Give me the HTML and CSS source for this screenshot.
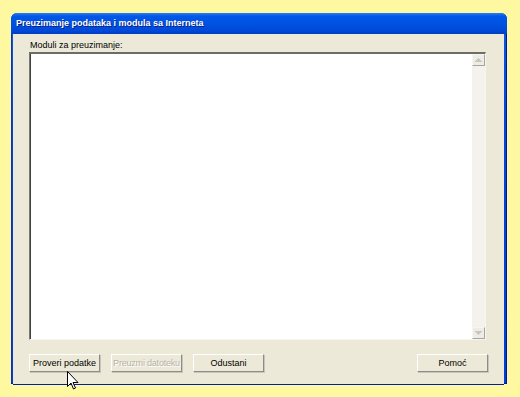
FILE: index.html
```html
<!DOCTYPE html>
<html>
<head>
<meta charset="utf-8">
<link rel="stylesheet" href="styles.css">
</head>
<body>
<div class="window">
  <div class="titlebar">Preuzimanje podataka i modula sa Interneta</div>
  <div class="client">
    <div class="label">Moduli za preuzimanje:</div>
    <div class="listbox">
      <div class="list-area"></div>
      <div class="scrollbar">
        <div class="sb-btn"><svg width="7" height="4" viewBox="0 0 7 4"><path d="M3 0h1v1h1v1h1v1h1v1H0V3h1V2h1V1h1z" fill="#c9c7ba"/></svg></div>
        <div class="sb-track"></div>
        <div class="sb-btn"><svg width="7" height="4" viewBox="0 0 7 4"><path d="M0 0h7v1H6v1H5v1H4v1H3V3H2V2H1V1H0z" fill="#c9c7ba"/></svg></div>
      </div>
    </div>
    <div class="buttons">
      <div class="btn">Proveri podatke</div>
      <div class="btn disabled">Preuzmi datoteku</div>
      <div class="btn">Odustani</div>
      <div class="spacer"></div>
      <div class="btn">Pomoć</div>
    </div>
  </div>
</div>
<svg class="cursor" width="12" height="19" viewBox="0 0 12 19"><path d="M0.5 0.5v15l3.5-3.5 2.5 6 2-1-2.5-5.5h5z" fill="#fff" stroke="#000" stroke-width="1"/></svg>
</body>
</html>
```
FILE: styles.css
```css
html, body { margin: 0; padding: 0; }
body {
  background: #fef8a0;
  width: 520px;
  height: 397px;
  position: relative;
  overflow: hidden;
  font-family: "Liberation Sans", Arial, sans-serif;
}
.window {
  position: absolute;
  left: 11px;
  top: 13px;
  width: 496px;
  height: 371px;
  box-sizing: border-box;
  background: linear-gradient(180deg, #0a5ae8 0%, #0046d8 30%, #0040d0 100%);
  border-radius: 6px 6px 0 0;
  display: flex;
  flex-direction: column;
  padding: 0 3px 3px 2px;
  box-shadow: inset -1px -1px 0 #0018a0, inset 1px 0 0 #1030c0;
  background-color: #0030c8;
}
.titlebar {
  height: 21px;
  flex: none;
  box-sizing: border-box;
  padding: 4px 0 0 5px;
  margin: 0 -3px 0 -2px;
  color: #fff;
  font-weight: bold;
  font-size: 9px;
  line-height: 12px;
  text-shadow: 1px 1px 0 #0a1e80;
  background: linear-gradient(180deg, #2b7bf5 0%, #0058e8 15%, #0052e2 50%, #0048d8 85%, #003cc0 100%);
  border-radius: 6px 6px 0 0;
}
.client {
  flex: 1;
  background: #ece9d8;
  display: flex;
  flex-direction: column;
  padding: 6px 18px 12px 16px;
  border-bottom: 1px solid #0020a0;
}
.label {
  font-size: 9px;
  color: #000;
  line-height: 11px;
  padding-left: 1px;
  height: 11px;
}
.listbox {
  margin-top: 1px;
  height: 288px;
  box-sizing: border-box;
  border-top: 2px solid #6d6c66;
  border-left: 1px solid #7a7972;
  border-right: 1px solid #f6f5f0;
  border-bottom: 1px solid #f6f5f0;
  box-shadow: inset 1px 0 0 #404040;
  background: #fff;
  display: flex;
}
.list-area { flex: 1; }
.scrollbar {
  width: 13px;
  display: flex;
  flex-direction: column;
  background: #f3f2ec;
}
.sb-btn {
  height: 12px;
  box-sizing: border-box;
  background: #eeede5;
  border: 1px solid #a6a59d;
  border-top-color: #f7f6f2;
  border-left-color: #f7f6f2;
  display: flex;
  align-items: center;
  justify-content: center;
}
.sb-track { flex: 1; }
.buttons {
  margin-top: 14px;
  margin-right: -2px;
  display: flex;
  gap: 11px;
}
.spacer { flex: 1; }
.btn {
  width: 71px;
  height: 18px;
  box-sizing: border-box;
  background: #ece9d8;
  border: 1px solid #ffffff;
  border-right-color: #8e8c84;
  border-bottom-color: #8e8c84;
  box-shadow: 1px 1px 0 #c8c6bc;
  font-size: 9px;
  line-height: 16px;
  text-align: center;
  color: #000;
  white-space: nowrap;
}
.btn.disabled {
  color: #b5b3a8;
  text-shadow: 1px 1px 0 #fff;
  letter-spacing: -0.2px;
}
.cursor {
  position: absolute;
  left: 67px;
  top: 371px;
}
```
